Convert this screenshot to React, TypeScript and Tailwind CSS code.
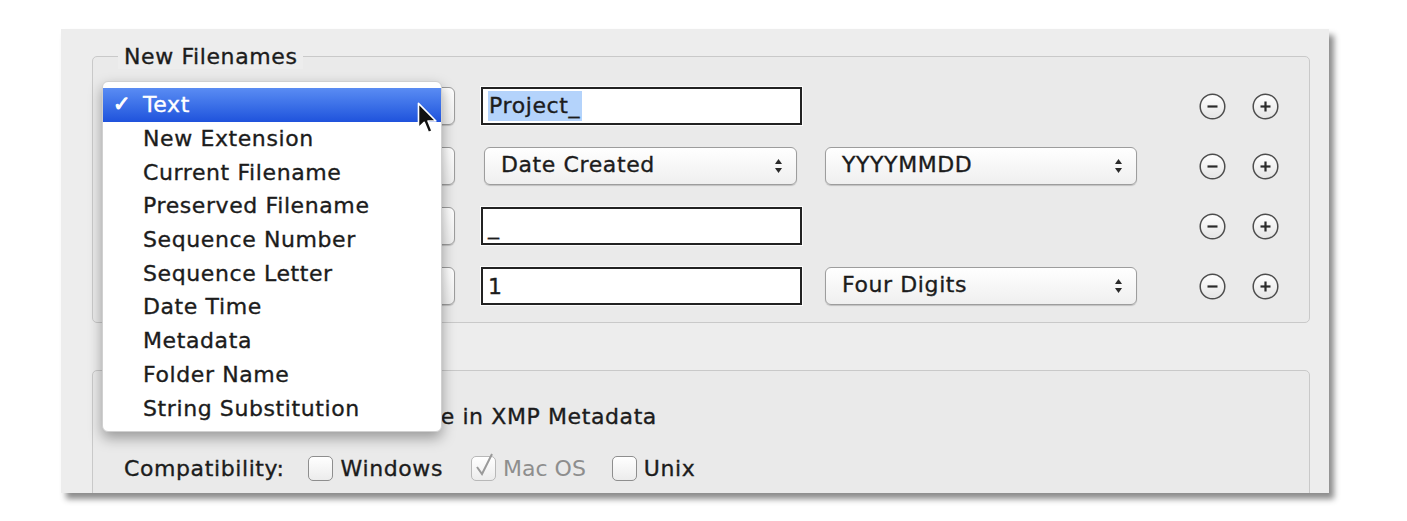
import React from 'react';

const MENU_ITEMS = [
    'Text',
    'New Extension',
    'Current Filename',
    'Preserved Filename',
    'Sequence Number',
    'Sequence Letter',
    'Date Time',
    'Metadata',
    'Folder Name',
    'String Substitution',
];

const Arrows: React.FC = () => (
    <svg width="9" height="16" viewBox="0 0 9 16" className="shrink-0">
        <path d="M4.5 1 L8 6 L1 6 Z" fill="#2a2a2a" />
        <path d="M4.5 15 L8 10 L1 10 Z" fill="#2a2a2a" />
    </svg>
);

const Popup: React.FC<{ label?: string; className?: string }> = ({ label, className = '' }) => (
    <div
        className={`h-[38px] flex items-center justify-between pl-[16px] pr-[13px] rounded-[6px] border border-[#9d9d9d] bg-gradient-to-b from-white to-[#efefef] shadow-[0_1px_1px_rgba(0,0,0,0.18)] ${className}`}
    >
        <span className="leading-none -mt-[2px]">{label}</span>
        <Arrows />
    </div>
);

const Field: React.FC<{ children?: React.ReactNode }> = ({ children }) => (
    <div className="w-[321px] h-[38px] flex items-center pl-[5px] bg-white border-2 border-[#222] shadow-[0_0_0_1px_rgba(255,255,255,0.8)]">
        {children}
    </div>
);

const RoundButton: React.FC<{ plus?: boolean; className?: string }> = ({ plus, className = '' }) => (
    <svg width="27" height="27" viewBox="0 0 27 27" className={`shrink-0 ${className}`}>
        <defs>
            <linearGradient id={plus ? 'gp' : 'gm'} x1="0" y1="0" x2="0" y2="1">
                <stop offset="0" stopColor="#ffffff" />
                <stop offset="1" stopColor="#e4e4e4" />
            </linearGradient>
        </defs>
        <circle cx="13.5" cy="13.5" r="12.3" fill={`url(#${plus ? 'gp' : 'gm'})`} stroke="#4d4d4d" strokeWidth="1.5" />
        <path d="M8.5 13.5 H18.5" stroke="#2b2b2b" strokeWidth="2.2" />
        {plus && <path d="M13.5 8.5 V18.5" stroke="#2b2b2b" strokeWidth="2.2" />}
    </svg>
);

const CheckBox: React.FC<{ checked?: boolean; disabled?: boolean }> = ({ checked, disabled }) => (
    <div className="relative w-[25px] h-[25px] shrink-0">
        <div
            className={`w-full h-full rounded-[5px] border ${disabled ? 'border-[#b8b8b8]' : 'border-[#8e8e8e]'} bg-gradient-to-b from-white to-[#ececec]`}
        />
        {checked && (
            <svg width="22" height="26" viewBox="0 0 22 26" className="absolute left-[3px] -top-[4px]">
                <path d="M3 15 L8 22 L18 2" fill="none" stroke="#9a9a9a" strokeWidth="2" />
            </svg>
        )}
    </div>
);

const Row: React.FC<{ mid: React.ReactNode; right?: React.ReactNode }> = ({ mid, right }) => (
    <div className="flex items-center h-[38px]">
        <Popup className="w-[345px]" />
        <div className="ml-[26px] w-[321px] flex">{mid}</div>
        <div className="ml-[23px] w-[312px]">{right}</div>
        <RoundButton className="ml-[62px]" />
        <RoundButton plus className="ml-[26px]" />
    </div>
);

const App: React.FC = () => {
    return (
        <div className="relative w-[1407px] h-[521px] overflow-hidden bg-white font-['DejaVu_Sans',sans-serif] text-[22px] tracking-[0.6px] [-webkit-text-stroke:0.35px] text-[#1c1c1c]">
            <div className="pt-[29px] pl-[61px]">
                <div className="w-[1268px] h-[464px] overflow-hidden bg-[#ededed] shadow-[5px_6px_6px_rgba(0,0,0,0.45)] pt-[27px] pl-[31px] pr-[19px]">
                    {/* New Filenames group */}
                    <div className="relative h-[267px] rounded-[5px] border border-[#c9c9c9] bg-[#eaeaea]">
                        <span className="absolute left-[25px] -top-[12px] px-[6px] bg-[#ededed] leading-[24px]">New Filenames</span>
                        <div className="pt-[30px] pl-[17px] flex flex-col gap-[22px]">
                            <Row
                                mid={
                                    <Field>
                                        <span className="bg-[#b4d3fb] leading-[30px] pl-[1px] pr-[2px]">Project_</span>
                                    </Field>
                                }
                            />
                            <Row
                                mid={<Popup label="Date Created" className="w-[313px] ml-[3px]" />}
                                right={<Popup label="YYYYMMDD" className="w-[312px]" />}
                            />
                            <Row mid={<Field>_</Field>} />
                            <Row
                                mid={<Field>1</Field>}
                                right={<Popup label="Four Digits" className="w-[312px]" />}
                            />
                        </div>
                    </div>

                    {/* Options group */}
                    <div className="relative mt-[47px] h-[200px] rounded-t-[5px] border border-[#c9c9c9] bg-[#eaeaea]">
                        <div className="pt-[30px] pl-[31px] flex flex-col gap-[22px]">
                            <div className="flex items-center h-[30px]">
                                <CheckBox />
                                <span className="ml-[6px]">Preserve current filename in XMP Metadata</span>
                            </div>
                            <div className="flex items-center h-[30px]">
                                <span>Compatibility:</span>
                                <div className="ml-[23px]"><CheckBox /></div>
                                <span className="ml-[8px]">Windows</span>
                                <div className="ml-[28px]"><CheckBox checked disabled /></div>
                                <span className="ml-[7px] [-webkit-text-stroke:0px] tracking-normal text-[#8e8e8e]">Mac OS</span>
                                <div className="ml-[26px]"><CheckBox /></div>
                                <span className="ml-[7px]">Unix</span>
                            </div>
                        </div>
                    </div>
                </div>
            </div>

            {/* Open popup menu */}
            <div className="absolute left-[102px] top-[81px] w-[340px] h-[351px] rounded-[6px] bg-white border border-[#d0d0d0] shadow-[0_6px_14px_rgba(0,0,0,0.35)] pt-[6px]">
                {MENU_ITEMS.map((item, i) => (
                    <div
                        key={item}
                        className={`flex items-center h-[33.7px] ${i === 0 ? 'bg-gradient-to-b from-[#5a8cf3] to-[#1f52dc] text-white' : ''}`}
                    >
                        <span className="w-[40px] pl-[10px] text-[21px] [-webkit-text-stroke:1px]">{i === 0 ? '✓' : ''}</span>
                        <span>{item}</span>
                    </div>
                ))}
            </div>

            {/* Mouse pointer */}
            <svg width="22" height="34" viewBox="0 0 16 25" className="absolute left-[417px] top-[102px]">
                <path d="M1 1 L1 19 L5.2 15 L8.3 22.5 L11 21.3 L8 14 L13.8 14 Z" fill="#111" stroke="#fff" strokeWidth="1.2" strokeLinejoin="round" />
            </svg>
        </div>
    );
};

export default App;
